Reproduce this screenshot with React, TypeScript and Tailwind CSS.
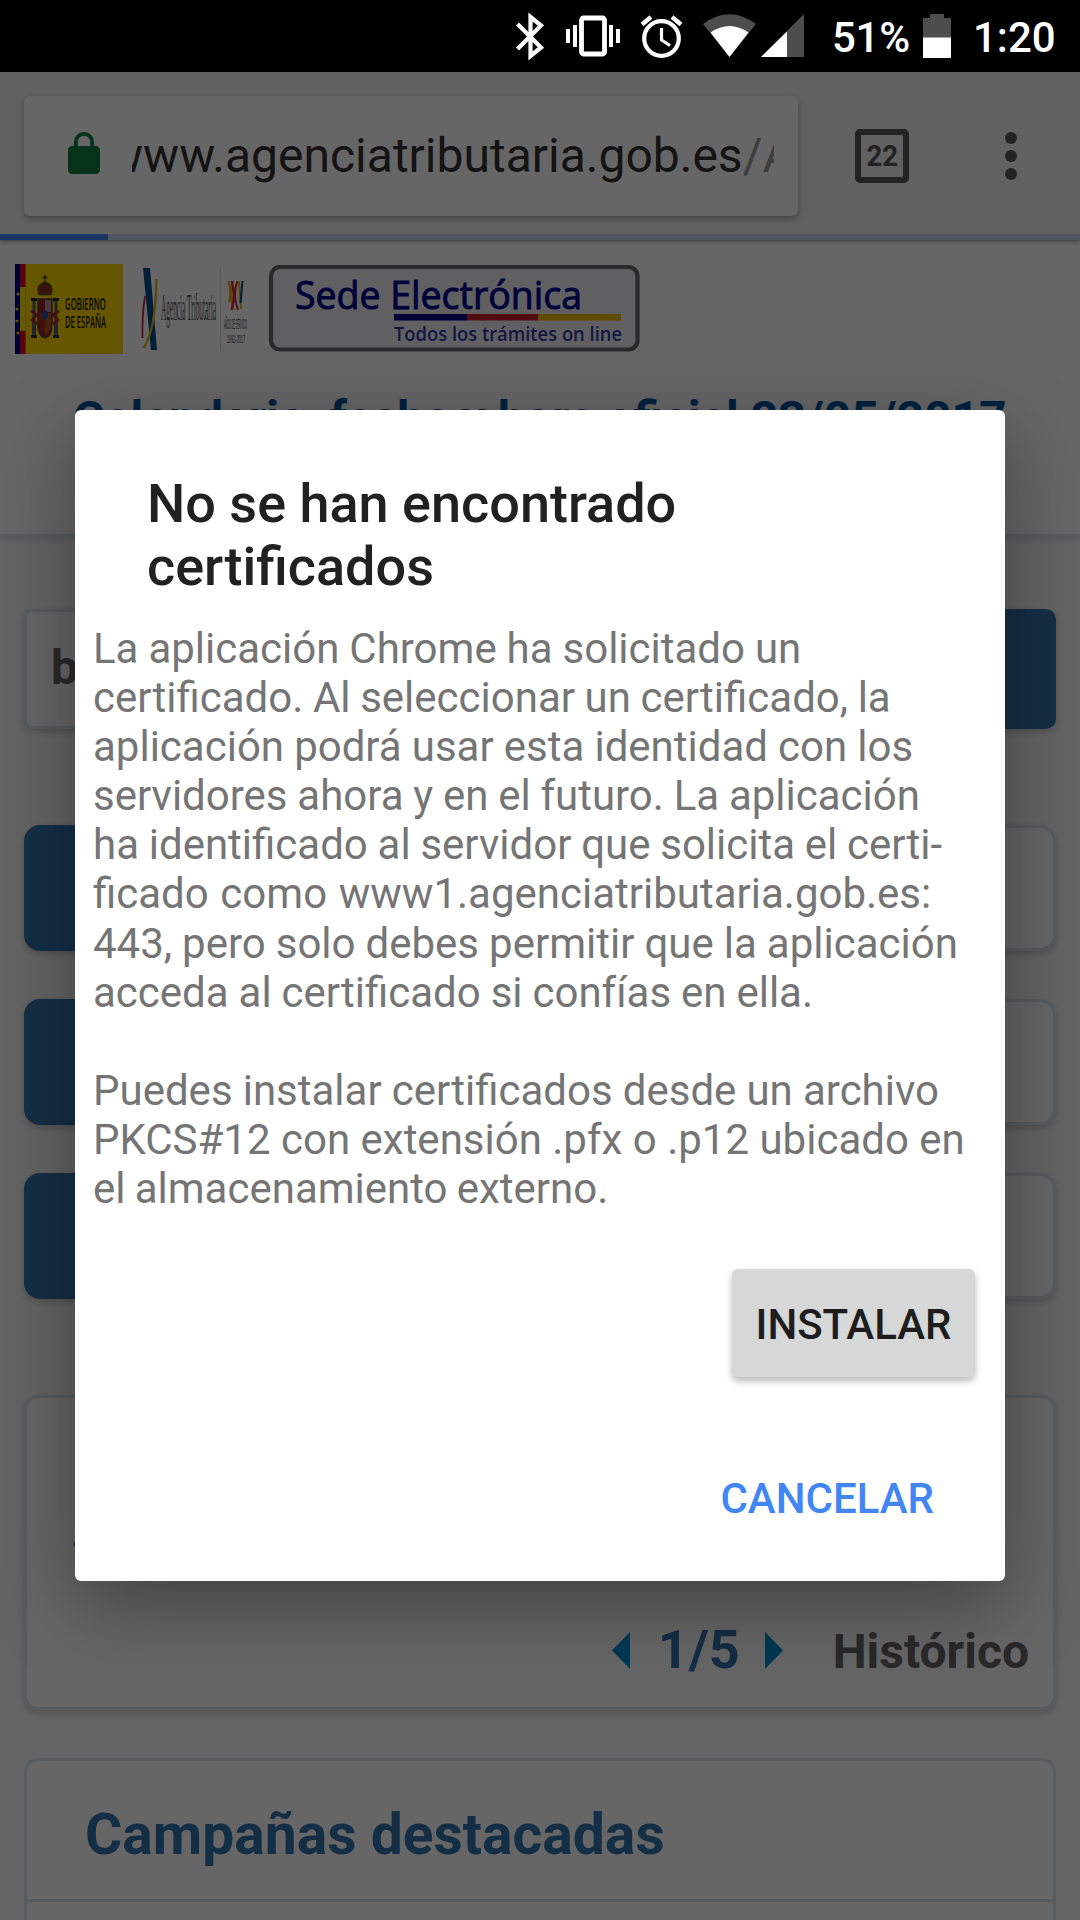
import React from "react";

function StatusBar() {
  return (
    <header className="flex h-[72px] items-center justify-end bg-black font-medium text-white">
      <svg className="h-[72px] w-[300px] shrink-0" viewBox="510 0 300 72" fill="none">
        <path d="M517.5 24 541 47.500 530.500 56V17L541 25.500 517.500 49" stroke="#fff" strokeWidth="4.200" />
        <rect x="581.500" y="18" width="23" height="36" rx="2" stroke="#fff" strokeWidth="4.800" />
        <path d="M568 29v14M575 25v22M611 25v22M618 29v14" stroke="#fff" strokeWidth="4" />
        <circle cx="661.500" cy="38.500" r="17.300" stroke="#fff" strokeWidth="4.200" />
        <path d="M661.500 28v12l8.500 5.500" stroke="#fff" strokeWidth="3.200" />
        <path d="M642 24.500 651 17M681 24.500 672 17" stroke="#fff" strokeWidth="4.500" />
        <path d="M703 24Q729.500 4.500 756 24L729.500 57Z" fill="#4d4d4d" />
        <path d="M710.500 32.500Q729.500 19.500 748.500 32.500L729.500 57Z" fill="#fff" />
        <path d="M804 14V57H761Z" fill="#4d4d4d" />
        <path d="M787 31.500V57H761Z" fill="#fff" />
      </svg>
      <span className="ml-[22px] w-[78px] pt-[3px] whitespace-nowrap text-[42px] leading-[72px] tracking-[-0.3px]">51%</span>
      <svg className="ml-[13px] h-11 w-7 shrink-0" viewBox="0 0 28 44">
        <path d="M7 0h14v4h7v20H0V4h7z" fill="#4d4d4d" />
        <path d="M0 23.500h28V44H0z" fill="#fff" />
      </svg>
      <span className="mr-[25px] ml-[22px] w-[82px] pt-[3px] whitespace-nowrap text-[42px] leading-[72px]">1:20</span>
    </header>
  );
}

function Toolbar() {
  return (
    <div className="relative z-10 shadow-[0_1px_4px_rgba(0,0,0,0.45)]">
      <div className="flex h-[162px] items-center bg-[#f2f2f2] pt-1.5 pl-6">
        <div className="flex h-[120px] w-[774px] items-center rounded-md bg-white pl-9 shadow-[0_3px_6px_rgba(0,0,0,0.3)]">
          <svg className="mb-1 h-12 w-12 shrink-0" viewBox="0 0 24 24" fill="#0b8043">
            <path d="M18 8h-1V6c0-2.760-2.240-5-5-5S7 3.240 7 6v2H6c-1.100 0-2 .9-2 2v10c0 1.100.9 2 2 2h12c1.100 0 2-.9 2-2V10c0-1.100-.9-2-2-2zm-2.900 0H8.900V6c0-1.710 1.390-3.100 3.100-3.100s3.100 1.390 3.100 3.100v2z" />
          </svg>
          <div className="ml-6 flex w-[642px] overflow-hidden">
            <span className="-ml-[25px] whitespace-nowrap text-[48px] leading-[64px] text-[#333]">
              www.agenciatributaria.gob.es<span className="text-[#999]">/AEAT</span>
            </span>
          </div>
        </div>
        <div className="ml-[57px] flex h-[54px] w-[54px] items-center justify-center rounded-[5px] border-[6px] border-[#575757]">
          <span className="scale-x-[0.92] text-[30px] leading-none font-bold text-[#575757]">22</span>
        </div>
        <div className="ml-24 flex flex-col gap-1.5">
          <i className="h-3 w-3 rounded-full bg-[#575757]" />
          <i className="h-3 w-3 rounded-full bg-[#575757]" />
          <i className="h-3 w-3 rounded-full bg-[#575757]" />
        </div>
      </div>
      <div className="h-1.5 bg-[#c6dafc]">
        <div className="h-1.5 w-[108px] bg-[#4285f4]" />
      </div>
    </div>
  );
}

function GobiernoLogo() {
  return (
    <svg className="h-[90px] w-[108px]" viewBox="15 264 108 90">
      <path d="M15 264h108v90H15z" fill="#ffd700" />
      <path d="M15 264h5.500v90H15z" fill="#000085" />
      <path d="M20 264h5.500v90H20z" fill="#d8002a" />
      <path d="M20 287h5.500v44H20z" fill="#f5ec00" />
      <g fill="#f5d800">
        <circle cx="18" cy="294" r="1.500" /><circle cx="17" cy="309" r="1.500" />
        <circle cx="17" cy="321" r="1.500" /><circle cx="18" cy="333" r="1.500" />
      </g>
      <path d="M32 322h4v16h-4zM54 322h4v16h-4zM32.500 299h3v38h-3zM54.500 299h3v38h-3z" fill="#56606e" />
      <path d="M31 298h6v3h-6zM53 298h6v3h-6zM31 335h6v3h-6zM53 335h6v3h-6z" fill="#2b2b45" />
      <path d="M31 311l6 4-5 5 5 4M59 311l-6 4 5 5-5 4" stroke="#b02034" strokeWidth="2.500" fill="none" />
      <path d="M38 299h14v26q0 11-7 13-7-2-7-13z" fill="#96202b" stroke="#59411c" strokeWidth="1.500" />
      <path d="M45 300h6v12h-6z" fill="#b98aa6" />
      <path d="M45 313h6v11q0 5-3 9l-3 2z" fill="#b5541c" />
      <path d="M39 313h6v20q-6-3-6-9z" fill="#a92a22" />
      <ellipse cx="45" cy="315" rx="3" ry="4.500" fill="#244a96" />
      <path d="M39 294q-3-9 6-12 9 3 6 12z" fill="#a2222c" stroke="#6b4e12" strokeWidth="1.800" />
      <path d="M39 287q6-5 12 0M45 275v18M42.500 277.500h5M39 294.500h12" stroke="#5a4310" strokeWidth="1.600" fill="none" />
      <g fill="#151500" fontFamily="Open Sans, sans-serif" fontWeight="600" fontSize="16">
        <text x="65" y="309.500" textLength="41" lengthAdjust="spacingAndGlyphs">GOBIERNO</text>
        <text x="65" y="328" textLength="41" lengthAdjust="spacingAndGlyphs">DE ESPAÑA</text>
      </g>
    </svg>
  );
}

function AgenciaLogo() {
  return (
    <svg className="ml-[17px] h-[90px] w-[112px]" viewBox="140 264 112 90">
      <path d="M143 268h7l7 82h-6z" fill="#004b8c" />
      <path d="M145 296q-3 18-2.500 42" stroke="#d81e35" strokeWidth="1.800" fill="none" />
      <path d="M156.500 279q-1 52-13 69" stroke="#e0ae18" strokeWidth="2.200" fill="none" />
      <text x="161" y="320" textLength="55" lengthAdjust="spacingAndGlyphs" fill="#555" fontFamily="Liberation Serif, serif" fontSize="37">Agencia Tributaria</text>
      <path d="M220.500 268v83" stroke="#dedede" />
      <g fill="none" strokeWidth="2">
        <path d="M228.500 281 Q232 294 229 302" stroke="#e0ae18" />
        <path d="M233.500 281Q228 295 234 310" stroke="#e0ae18" />
        <path d="M231.500 281Q236 295 231.500 310" stroke="#d81e35" />
        <path d="M237.500 281Q232 295 238 310" stroke="#d81e35" />
        <path d="M239 281 241 309" stroke="#e0ae18" />
        <path d="M242.500 281 240.500 303" stroke="#004b8c" />
      </g>
      <g fill="#444" fontFamily="Liberation Sans, sans-serif">
        <text x="224" y="329" textLength="23" lengthAdjust="spacingAndGlyphs" fontSize="15">AÑOS DE SERVICIO</text>
        <text x="227" y="343" textLength="18" lengthAdjust="spacingAndGlyphs" fontSize="10">1992-2017</text>
      </g>
    </svg>
  );
}

function SedeLogo() {
  return (
    <svg className="ml-4 h-[90px] w-[372px]" viewBox="268 264 372 90">
      <rect x="271" y="267" width="366.500" height="82.500" rx="9" fill="#f0eff8" stroke="#696969" strokeWidth="4.200" />
      <g fill="#00008f" fontFamily="Open Sans, sans-serif">
        <text x="295" y="309" fontSize="38" textLength="287" lengthAdjust="spacingAndGlyphs" stroke="#00008f" strokeWidth="0.900">Sede Electrónica</text>
        <text x="394" y="341" fontSize="19.500" fontWeight="600" textLength="228" lengthAdjust="spacingAndGlyphs" fillOpacity="0.800">Todos los trámites on line</text>
      </g>
      <path d="M394 314h73v6.500h-73z" fill="#000085" />
      <path d="M467 314h71v6.500h-71z" fill="#c8202c" />
      <path d="M538 314h83v6.500h-83z" fill="#eac000" />
    </svg>
  );
}

function OptionRow() {
  return (
    <div className="mb-12 flex h-[126px] rounded-2xl shadow-[0_3px_7px_rgba(0,0,0,0.2)]">
      <div className="w-[126px] rounded-l-2xl bg-[#3375ae]" />
      <div className="grow rounded-r-2xl border-[3px] border-[#dce6ee] bg-white" />
    </div>
  );
}

function Page() {
  return (
    <main className="bg-[#fafafa]">
      <section className="h-[298px] border-b-[4px] border-[#dce6ee] bg-white pt-6 shadow-[0_2px_6px_rgba(0,0,0,0.12)]">
        <div className="flex pl-[15px]">
          <GobiernoLogo />
          <AgenciaLogo />
          <SedeLogo />
        </div>
        <h1 className="mt-[33px] text-center text-[48px] leading-[64px] font-bold whitespace-nowrap text-[#00549c]">
          Calendario, fecha y hora oficial 23/05/2017
        </h1>
      </section>
      <div className="px-6 pt-[71px]">
        <div className="mb-24 flex h-[120px] rounded-lg shadow-[0_3px_7px_rgba(0,0,0,0.18)]">
          <div className="flex grow items-center rounded-l-lg border-[3px] border-[#dce6ee] bg-white pb-0.5 pl-6 text-[48px] leading-[56px] font-bold text-[#666]">
            buscar
          </div>
          <div className="w-[140px] rounded-r-[10px] bg-[#3375ae]" />
        </div>
        <OptionRow />
        <OptionRow />
        <OptionRow />
        <section className="mt-24 flex h-[315px] flex-col justify-between rounded-[14px] border-[3px] border-[#dce6ee] bg-white shadow-[0_3px_7px_rgba(0,0,0,0.18)]">
          <p className="mt-[101px] pl-[46px] text-[51px] leading-[60px] font-bold text-[#3373ae]">Avisos</p>
          <div className="mb-[25px] flex items-center justify-end pr-6">
            <svg className="h-[37px] w-[18px]" viewBox="0 0 18 37" fill="#008fd0"><path d="M18 0v37L0 18.500z" /></svg>
            <span className="ml-[28px] w-[78px] text-[54px] leading-[64px] font-bold whitespace-nowrap text-[#3373ae]">1/5</span>
            <svg className="ml-[29px] h-[37px] w-[18px]" viewBox="0 0 18 37" fill="#008fd0"><path d="M0 0v37l18-18.500z" /></svg>
            <span className="ml-[50px] pt-[3px] text-[48px] leading-[60px] font-bold text-[#666]">Histórico</span>
          </div>
        </section>
        <section className="mt-12 h-[162px] rounded-t-[14px] border-[3px] border-b-0 border-[#dce6ee] bg-white">
          <h2 className="h-[141px] border-b-[3px] border-[#dce6ee] pl-[58px] text-[57px] leading-[147px] font-bold text-[#3373ae]">
            Campañas destacadas
          </h2>
        </section>
      </div>
    </main>
  );
}

const messageLines = [
  { text: "La aplicación Chrome ha solicitado un", spacing: "[word-spacing:-0.5px]" },
  { text: "certificado. Al seleccionar un certificado, la", spacing: "[word-spacing:-0.8px]" },
  { text: "aplicación podrá usar esta identidad con los", spacing: "[word-spacing:-0.3px]" },
  { text: "servidores ahora y en el futuro. La aplicación", spacing: "[word-spacing:-0.65px]" },
  { text: "ha identificado al servidor que solicita el certi-", spacing: "[word-spacing:-0.65px]" },
  { text: "ficado como www1.agenciatributaria.gob.es:", spacing: "[word-spacing:1.2px]" },
  { text: "443, pero solo debes permitir que la aplicación", spacing: "[word-spacing:-0.4px]" },
  { text: "acceda al certificado si confías en ella.", spacing: "[word-spacing:-0.5px]" },
  { text: "\u00a0", spacing: "" },
  { text: "Puedes instalar certificados desde un archivo", spacing: "[word-spacing:-0.3px]" },
  { text: "PKCS#12 con extensión .pfx o .p12 ubicado en", spacing: "" },
  { text: "el almacenamiento externo.", spacing: "[word-spacing:-1.2px]" },
];

function CertificateDialog() {
  return (
    <div role="dialog" className="h-[1171px] w-[930px] rounded-md bg-white pt-[62px] shadow-[0_24px_80px_rgba(0,0,0,0.36)]">
      <h2 className="pl-[72px] text-[54px] leading-[63px] font-medium text-[#212121]">
        No se han encontrado
        <br />
        certificados
      </h2>
      <div className="mt-[26px] pl-[18px] text-[42px] leading-[49.1px] whitespace-nowrap text-[#757575]">
        {messageLines.map((line, i) => (
          <p key={i} className={line.spacing}>{line.text}</p>
        ))}
      </div>
      <div className="mt-[55.8px] flex flex-col items-end">
        <button className="mr-[30px] h-[108px] w-[243px] rounded-md bg-[#d6d7d7] pt-[3px] text-[42px] font-medium text-[#1d1d1d] shadow-[0_4px_7px_rgba(0,0,0,0.28)]">
          INSTALAR
        </button>
        <button className="mt-[86px] mr-[71px] h-[72px] text-[42px] font-medium text-[#4285f4]">CANCELAR</button>
      </div>
    </div>
  );
}

export default function App() {
  return (
    <div className="relative h-[1920px] w-[1080px] overflow-hidden bg-black font-[Roboto,sans-serif]">
      <StatusBar />
      <Toolbar />
      <Page />
      <div className="absolute inset-x-0 top-[72px] bottom-0 z-20 flex items-start justify-center bg-black/60 pt-[338px]">
        <CertificateDialog />
      </div>
    </div>
  );
}
